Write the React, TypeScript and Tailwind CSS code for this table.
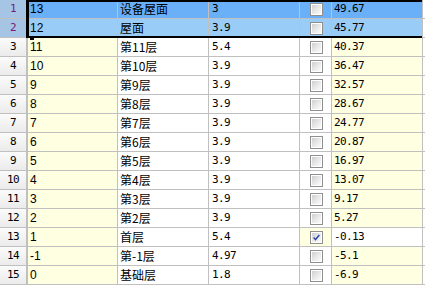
import React from "react";

type Row = [number, string, string, string, boolean, string];

const rows: Row[] = [
  [1, "13", "设备屋面", "3", false, "49.67"],
  [2, "12", "屋面", "3.9", false, "45.77"],
  [3, "11", "第11层", "5.4", false, "40.37"],
  [4, "10", "第10层", "3.9", false, "36.47"],
  [5, "9", "第9层", "3.9", false, "32.57"],
  [6, "8", "第8层", "3.9", false, "28.67"],
  [7, "7", "第7层", "3.9", false, "24.77"],
  [8, "6", "第6层", "3.9", false, "20.87"],
  [9, "5", "第5层", "3.9", false, "16.97"],
  [10, "4", "第4层", "3.9", false, "13.07"],
  [11, "3", "第3层", "3.9", false, "9.17"],
  [12, "2", "第2层", "3.9", false, "5.27"],
  [13, "1", "首层", "5.4", true, "-0.13"],
  [14, "-1", "第-1层", "4.97", false, "-5.1"],
  [15, "0", "基础层", "1.8", false, "-6.9"],
];

const mono = "font-['DejaVu_Sans_Mono',monospace] text-[11px] tracking-[-0.6px]";
const cjk = "font-['Noto_Sans_CJK_SC',sans-serif] text-[12px]";
const sans = "font-['Liberation_Sans',sans-serif] text-[12px]";

function CheckBox({ checked }: { checked: boolean }) {
  return (
    <div className="w-[13px] h-[13px] border border-[#8f8f8f] bg-white p-px">
      <div className="w-full h-full bg-gradient-to-br from-[#cfcfcf] via-[#e8e8e8] to-[#fbfbfb] relative">
        {checked && (
          <svg viewBox="0 0 11 11" className="absolute inset-0 w-full h-full">
            <path d="M2 5.5 L4.3 8 L9 2.5" fill="none" stroke="#2c48a8" strokeWidth="1.8" />
          </svg>
        )}
      </div>
    </div>
  );
}

export default function App() {
  return (
    <div className="w-[425px] h-[293px] bg-white relative overflow-hidden text-black">
      <div className="flex flex-col">
        {rows.map(([n, a, b, c, chk, e]) => {
          const sel = n === 1 ? "bg-[#69b0f8]" : n === 2 ? "bg-[#99ccf6]" : "";
          const yellow = "bg-[#ffffe1]";
          const white = "bg-white";
          const c1 = sel || yellow;
          const c2 = sel || white;
          const c3 = sel || white;
          const c4 = sel || (chk ? yellow : white);
          const c5 = sel || (chk ? white : yellow);
          const isSel = n <= 2;
          return (
            <div key={n} className="flex h-[19px] border-b border-[#c0c0c0]">
              <div
                className={`w-[28px] shrink-0 flex items-center justify-center border-r-2 border-[#c0c0c0] ${mono} ${
                  isSel ? "bg-[#a6c4e4] text-[#7a1a7a]" : "bg-gradient-to-b from-[#fbfbfb] to-[#ebebeb]"
                }`}
              >
                {n}
              </div>
              <div className={`w-[90px] shrink-0 flex items-center pl-[2px] border-r border-[#c0c0c0] ${sans} ${c1}`}>
                {a}
              </div>
              <div className={`w-[91px] shrink-0 flex items-center pl-[2px] border-r border-[#c0c0c0] ${cjk} ${c2}`}>
                {b}
              </div>
              <div className={`w-[91px] shrink-0 flex items-center pl-[3px] border-r border-[#c0c0c0] ${mono} ${c3}`}>
                {c}
              </div>
              <div className={`w-[32px] shrink-0 flex items-center justify-center pl-px border-r border-[#c0c0c0] ${c4}`}>
                <CheckBox checked={chk} />
              </div>
              <div className={`w-[91px] shrink-0 flex items-center pl-[2px] border-r border-[#c0c0c0] ${mono} ${c5}`}>
                {e}
              </div>
            </div>
          );
        })}
      </div>
      {/* selection outline */}
      <div className="absolute left-[26px] top-0 w-[396px] h-[38px] border-t-2 border-l-[3px] border-b-2 border-black pointer-events-none" />
      <div className="absolute left-[30px] top-[36px] w-[4px] h-[4px] bg-black" />
    </div>
  );
}
